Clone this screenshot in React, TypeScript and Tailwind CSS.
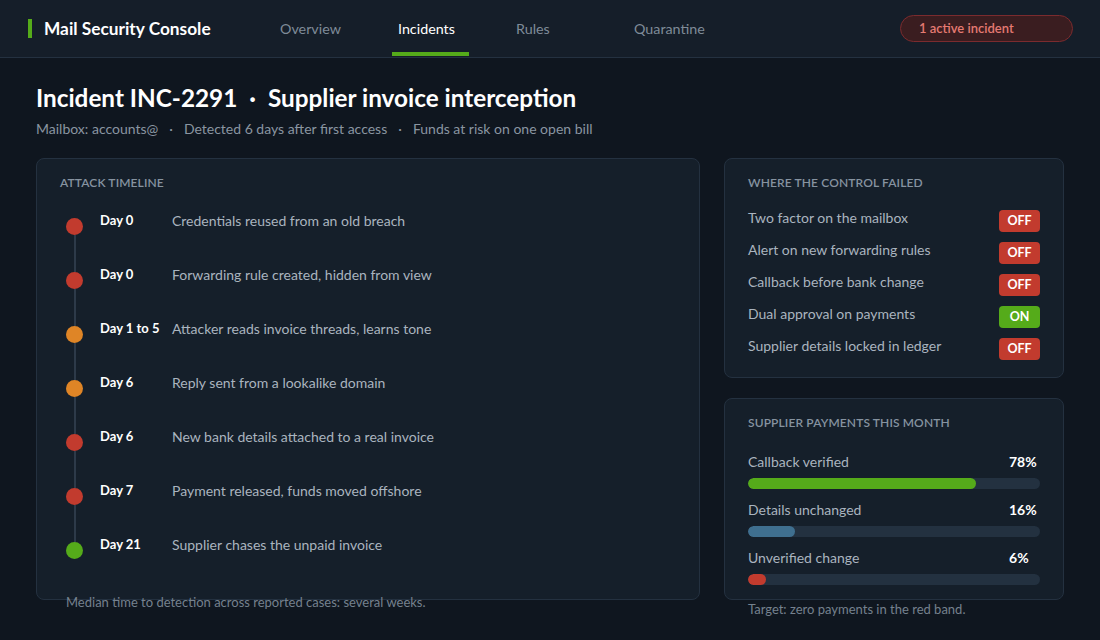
const NAV = ["Overview", "Incidents", "Rules", "Quarantine"];

const TIMELINE = [
  { day: "Day 0", text: "Credentials reused from an old breach", color: "bg-[#c23b2e]" },
  { day: "Day 0", text: "Forwarding rule created, hidden from view", color: "bg-[#c23b2e]" },
  { day: "Day 1 to 5", text: "Attacker reads invoice threads, learns tone", color: "bg-[#df8526]" },
  { day: "Day 6", text: "Reply sent from a lookalike domain", color: "bg-[#df8526]" },
  { day: "Day 6", text: "New bank details attached to a real invoice", color: "bg-[#c23b2e]" },
  { day: "Day 7", text: "Payment released, funds moved offshore", color: "bg-[#c23b2e]" },
  { day: "Day 21", text: "Supplier chases the unpaid invoice", color: "bg-[#55ab1a]" },
];

const CONTROLS = [
  { label: "Two factor on the mailbox", on: false },
  { label: "Alert on new forwarding rules", on: false },
  { label: "Callback before bank change", on: false },
  { label: "Dual approval on payments", on: true },
  { label: "Supplier details locked in ledger", on: false },
];

const PAYMENTS = [
  { label: "Callback verified", pct: 78, color: "bg-[#55ab1a]" },
  { label: "Details unchanged", pct: 16, color: "bg-[#3f6f8f]" },
  { label: "Unverified change", pct: 6, color: "bg-[#c23b2e]" },
];

function CardTitle({ children }: { children: string }) {
  return (
    <h2 className="text-[12px] leading-[16px] font-semibold uppercase text-[#8693a0] tracking-[0.01em]">
      {children}
    </h2>
  );
}

export default function App() {
  return (
    <div
      className="min-h-[640px] w-full bg-[#0f161f] text-white"
      style={{ fontFamily: "Lato, 'Noto Sans', sans-serif" }}
    >
      {/* Top bar */}
      <header className="h-[58px] flex items-center bg-[#151e29] border-b border-[#243140] pl-[28px] pr-[27px]">
        <div className="w-[246px] flex items-center gap-[12px]">
          <span className="w-[4px] h-[19px] bg-[#55ab1a]" />
          <span className="text-[17.3px] font-bold text-white">Mail Security Console</span>
        </div>
        <nav className="flex h-full gap-[41px]">
          {NAV.map((item) => {
            const active = item === "Incidents";
            return (
              <div key={item} className="relative w-[77px] h-full flex items-center px-[6px]">
                <span className={`text-[14.3px] ${active ? "text-white" : "text-[#7f8b98]"}`}>{item}</span>
                {active && <span className="absolute left-0 right-0 bottom-[1px] h-[4px] bg-[#55ab1a]" />}
              </div>
            );
          })}
        </nav>
        <div className="ml-auto w-[173px] h-[27px] flex items-center pl-[18px] rounded-full bg-[#3a1d20] border border-[#7b2b2e]">
          <span className="text-[13px] font-semibold text-[#e57a72]">1 active incident</span>
        </div>
      </header>

      <main className="px-[36px]">
        {/* Heading */}
        <h1 className="mt-[24px] text-[24.3px] leading-[32px] font-bold text-white flex items-center">
          <span>Incident INC-2291</span>
          <span className="mx-[12px]">·</span>
          <span>Supplier invoice interception</span>
        </h1>
        <p className="mt-[5px] text-[14px] leading-[20px] text-[#8a95a1] flex">
          <span>Mailbox: accounts@</span>
          <span className="mx-[11px]">·</span>
          <span>Detected 6 days after first access</span>
          <span className="mx-[11px]">·</span>
          <span>Funds at risk on one open bill</span>
        </p>

        <div className="mt-[19px] flex gap-[24px]">
          {/* Attack timeline */}
          <section className="flex-1 h-[442px] rounded-[8px] border border-[#243140] bg-[#151f2a] pl-[23px] pt-[16px]">
            <CardTitle>Attack timeline</CardTitle>
            <ol className="mt-[20px]">
              {TIMELINE.map((row, i) => (
                <li key={i} className="flex h-[54px]">
                  <div className="w-[28px] pl-[6px] pt-[7px] flex flex-col">
                    <div className="w-[17px] flex flex-col items-center">
                      <span className={`w-[17px] h-[17px] rounded-full ${row.color}`} />
                      {i < TIMELINE.length - 1 && <span className="w-[2px] h-[37px] bg-[#2d3a49]" />}
                    </div>
                  </div>
                  <span className="ml-[12px] w-[72px] text-[13px] leading-[18px] font-bold text-white">
                    {row.day}
                  </span>
                  <span className="text-[14px] leading-[20px] text-[#aab4bf]">{row.text}</span>
                </li>
              ))}
            </ol>
            <p className="mt-[4px] ml-[6px] text-[13px] leading-[18px] text-[#75818e]">
              Median time to detection across reported cases: several weeks.
            </p>
          </section>

          {/* Right column */}
          <div className="w-[340px] flex flex-col">
            <section className="h-[220px] rounded-[8px] border border-[#243140] bg-[#151f2a] px-[23px] pt-[16px]">
              <CardTitle>Where the control failed</CardTitle>
              <ul className="mt-[17px]">
                {CONTROLS.map((c) => (
                  <li key={c.label} className="h-[32px] flex items-start justify-between">
                    <span className="text-[14px] leading-[20px] text-[#aab4bf]">{c.label}</span>
                    <span
                      className={`mt-[2px] w-[41px] h-[22px] rounded-[4px] flex items-center justify-center text-[12.5px] font-bold text-white ${
                        c.on ? "bg-[#55ab1a]" : "bg-[#c23b2e]"
                      }`}
                    >
                      {c.on ? "ON" : "OFF"}
                    </span>
                  </li>
                ))}
              </ul>
            </section>

            <section className="mt-[20px] h-[202px] rounded-[8px] border border-[#243140] bg-[#151f2a] px-[23px] pt-[16px]">
              <CardTitle>Supplier payments this month</CardTitle>
              <div className="mt-[21px]">
                {PAYMENTS.map((p) => (
                  <div key={p.label} className="mb-[11px]">
                    <div className="flex items-center justify-between">
                      <span className="text-[14px] leading-[20px] text-[#aab4bf]">{p.label}</span>
                      <span className="w-[31px] text-[14px] leading-[20px] font-bold text-white">{p.pct}%</span>
                    </div>
                    <div className="mt-[6px] h-[11px] rounded-full bg-[#233140] overflow-hidden">
                      <div className={`h-full rounded-full ${p.color}`} style={{ width: `${p.pct}%` }} />
                    </div>
                  </div>
                ))}
              </div>
            </section>
            <p className="mt-[0px] ml-[24px] text-[13px] leading-[18px] text-[#75818e]">
              Target: zero payments in the red band.
            </p>
          </div>
        </div>
      </main>
    </div>
  );
}
